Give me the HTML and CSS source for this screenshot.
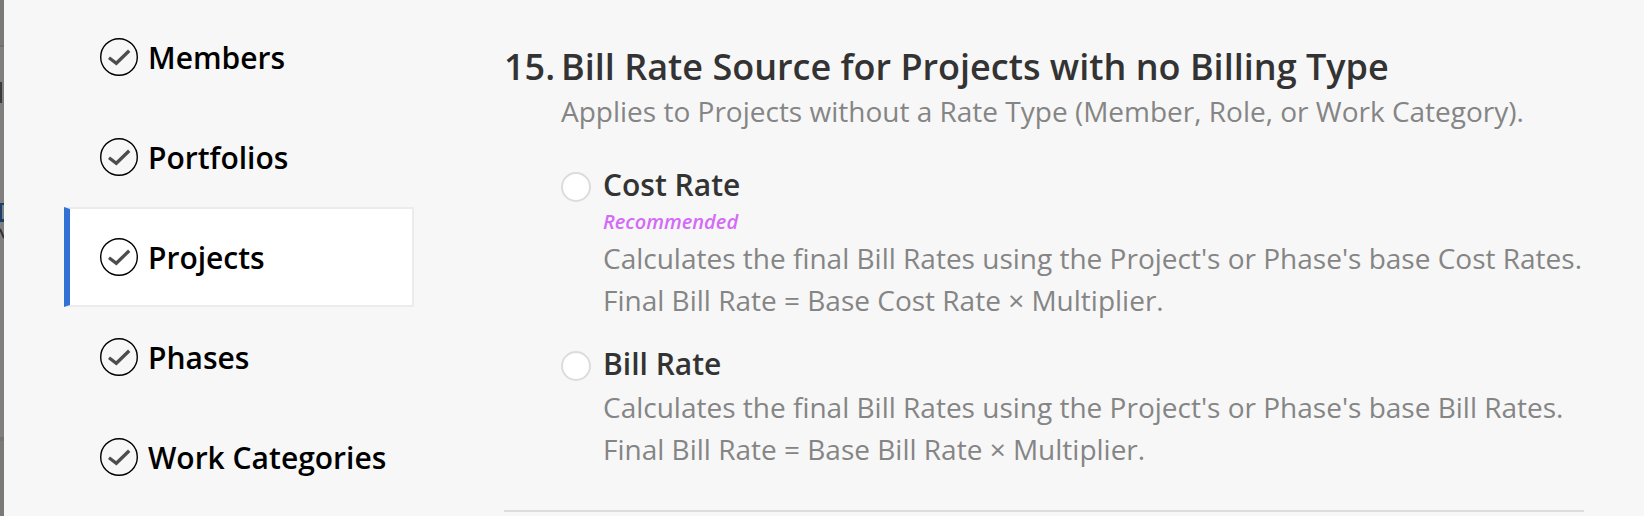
FILE: index.html
```html
<!DOCTYPE html>
<html lang="en">
<head>
    <meta charset="UTF-8">
    <meta name="viewport" content="width=device-width, initial-scale=1.0">
    <title>Settings - Projects</title>
    <link rel="stylesheet" href="styles.css">
</head>
<body>
<!-- check icon shared by the nav items -->
<svg class="sprite" aria-hidden="true">
    <symbol id="check" viewBox="0 0 38 38">
        <circle cx="19" cy="19" r="18.3" fill="none" stroke="#000" stroke-width="1.4"/>
        <path d="M9 19.8L16.3 25.3L29.2 12.7" fill="none" stroke="#4d4d4d" stroke-width="3.3"/>
    </symbol>
</svg>

<div class="page">
    <!-- dimmed page behind the panel -->
    <div class="backdrop">
        <svg width="4" height="516" viewBox="0 0 4 516" aria-hidden="true">
            <rect width="4" height="47" fill="#7a7978"/>
            <rect y="45" width="4" height="2" fill="#716f6e"/>
            <rect y="82" width="2" height="21" fill="#3b3a3a"/>
            <rect y="203" width="4" height="19" fill="#1b3f66"/>
            <rect x="2" y="205" width="2" height="14" fill="#7d8086"/>
            <path d="M0 229L4 238" fill="none" stroke="#333231" stroke-width="2"/>
            <rect y="437" width="4" height="4" fill="#737271"/>
            <rect y="441" width="4" height="75" fill="#7a7978"/>
        </svg>
    </div>

    <nav class="sidebar">
        <a href="#members" class="nav-item"><svg class="nav-icon"><use href="#check"/></svg>Members</a>
        <a href="#portfolios" class="nav-item"><svg class="nav-icon"><use href="#check"/></svg>Portfolios</a>
        <a href="#projects" class="nav-item active"><svg class="nav-icon"><use href="#check"/></svg>Projects</a>
        <a href="#phases" class="nav-item"><svg class="nav-icon"><use href="#check"/></svg>Phases</a>
        <a href="#work-categories" class="nav-item"><svg class="nav-icon"><use href="#check"/></svg>Work Categories</a>
    </nav>

    <main class="content">
        <section class="question">
            <div class="number">15.</div>
            <div class="question-body">
                <h2>Bill Rate Source for Projects with no Billing Type</h2>
                <p class="description">Applies to Projects without a Rate Type (Member, Role, or Work Category).</p>

                <div class="options">
                    <div class="option">
                        <input type="radio" name="rateSource" id="costRate">
                        <div>
                            <label for="costRate">Cost Rate</label>
                            <div class="recommended">Recommended</div>
                            <p class="description">Calculates the final Bill Rates using the Project's or Phase's base Cost Rates.<br>Final Bill Rate = Base Cost Rate × Multiplier.</p>
                        </div>
                    </div>
                    <div class="option">
                        <input type="radio" name="rateSource" id="billRate">
                        <div>
                            <label for="billRate">Bill Rate</label>
                            <p class="description">Calculates the final Bill Rates using the Project's or Phase's base Bill Rates.<br>Final Bill Rate = Base Bill Rate × Multiplier.</p>
                        </div>
                    </div>
                </div>
            </div>
        </section>
    </main>
</div>
</body>
</html>
```

FILE: styles.css
```css
* {
    box-sizing: border-box;
}

body {
    margin: 0;
    background: #f7f7f7;
    color: #333333;
    font-family: 'Open Sans', 'Noto Sans', sans-serif;
}

.sprite {
    display: none;
}

.page {
    display: flex;
    min-height: 100vh;
}

.backdrop {
    flex: 0 0 4px;
    background: #807f7e;
}

.backdrop svg {
    display: block;
}

.sidebar {
    flex: 0 0 350px;
    margin-left: 60px;
    padding-top: 7px;
}

.nav-item {
    display: flex;
    align-items: center;
    gap: 10px;
    height: 100px;
    padding-left: 30px;
    border: 2px solid transparent;
    border-left-width: 6px;
    color: #000000;
    font-size: 30px;
    font-weight: 600;
    line-height: 43px;
    text-decoration: none;
    white-space: nowrap;
}

.nav-item.active {
    background: #ffffff;
    border-color: #ececec;
    border-left-color: #3272d4;
}

.nav-icon {
    width: 38px;
    height: 38px;
}

.content {
    flex: 1;
    padding: 43px 60px 0 90px;
}

.question {
    display: flex;
    padding-bottom: 40px;
    border-bottom: 2px solid #dcdcdc;
}

.number,
h2 {
    margin: 0;
    font-size: 36px;
    font-weight: 600;
    line-height: 47px;
}

.number {
    flex: 0 0 57px;
}

.question-body {
    flex: 1;
}

.description {
    margin: 0;
    color: #858585;
    font-size: 28px;
    line-height: 42px;
}

.options {
    display: flex;
    flex-direction: column;
    gap: 21px;
    margin-top: 31px;
}

.option {
    display: flex;
    gap: 12px;
}

.option input {
    appearance: none;
    flex: 0 0 30px;
    height: 30px;
    margin: 9px 0 0;
    background: #ffffff;
    border: 2px solid #dcdcdc;
    border-radius: 50%;
}

.option input:checked {
    border: 9px solid #3272d4;
}

.option label {
    display: block;
    font-size: 30px;
    font-weight: 600;
    line-height: 44px;
}

.recommended {
    color: #d36bf7;
    font-size: 20px;
    font-style: italic;
    font-weight: 600;
    line-height: 30px;
}
```
